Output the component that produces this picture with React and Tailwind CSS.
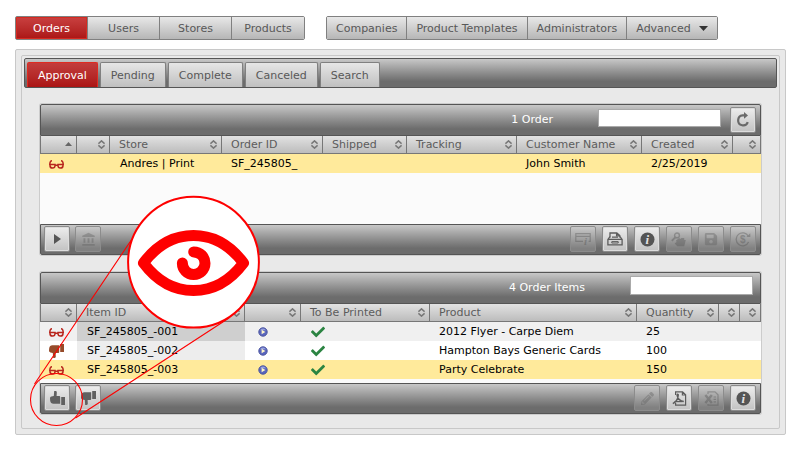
import { FaCheck, FaPencilAlt, FaSave } from "react-icons/fa";
import { MdAccountBalance } from "react-icons/md";
import clsx from "clsx";

const mainNav = ["Orders", "Users", "Stores", "Products"];
const adminNav = ["Companies", "Product Templates", "Administrators", "Advanced"];
const tabs = ["Approval", "Pending", "Complete", "Canceled", "Search"];

const orderColumns = [
    { width: "w-[37px]", sort: "asc" },
    { width: "w-[33px]" },
    { label: "Store", width: "w-[112px]" },
    { label: "Order ID", width: "w-[101px]" },
    { label: "Shipped", width: "w-[84px]" },
    { label: "Tracking" },
    { label: "Customer Name", width: "w-[125px]" },
    { label: "Created", width: "w-[91px]" },
    { width: "w-[28px]" },
];

const itemColumns = [
    { width: "w-[37px]" },
    { label: "Item ID", width: "w-[168px]" },
    { width: "w-[56px]" },
    { label: "To Be Printed", width: "w-[129px]" },
    { label: "Product" },
    { label: "Quantity", width: "w-[82px]" },
    { width: "w-[21px]" },
    { width: "w-[21px]" },
];

const items = [
    { id: "SF_245805_-001", status: "review", product: "2012 Flyer - Carpe Diem", quantity: 25, row: "bg-[#f0f0f0]", idCell: "bg-[#cfcfcf]" },
    { id: "SF_245805_-002", status: "rejected", product: "Hampton Bays Generic Cards", quantity: 100, row: "bg-white", idCell: "bg-[#ededed]" },
    { id: "SF_245805_-003", status: "review", product: "Party Celebrate", quantity: 150, row: "bg-[#ffea9b]", idCell: "" },
];

function GlassesIcon() {
    return (
        <svg width="15" height="9" viewBox="0 0 15 9" fill="none" stroke="#b8261e" strokeWidth="1.5" aria-label="Needs review">
            <path d="M3 .8C1.4.8.8 2 .8 5M12 .8c1.6 0 2.2 1.2 2.2 4.2" />
            <path d="M1 4.4h5v1.4a2.4 2.4 0 0 1-2.4 2.3A2.6 2.6 0 0 1 1 5.6ZM9 4.4h5v1.2a2.6 2.6 0 0 1-2.6 2.5A2.4 2.4 0 0 1 9 5.8ZM6 5.2h3" />
        </svg>
    );
}

function ThumbIcon({ down, color = "#606060", label }) {
    return (
        <svg width="15" height="14" viewBox="0 0 15 14" fill={color} aria-label={label}>
            <g transform={down ? "matrix(1 0 0 -1 0 14)" : undefined}>
                <path d="M4.2 0h1.4c.8 0 1.2.6 1.2 1.4L6.6 5H9c.8 0 1.2.4 1.2 1.2v6.6H3.4C1.6 12.8.4 11.6.2 9.8L0 7.4C0 6.4.6 5.8 1.4 5.6L3.8 5Z" />
                <path d="M11.2 6H15v8h-3.8Z" />
            </g>
        </svg>
    );
}

function SortIcon({ sort }) {
    if (sort === "asc") {
        return (
            <svg width="7" height="9" viewBox="0 0 7 9" className="flex-none" fill="#666">
                <path d="M0 6 3.5 2 7 6Z" />
            </svg>
        );
    }
    return (
        <svg width="7" height="9" viewBox="0 0 7 9" className="flex-none" fill="none" stroke="#777" strokeWidth="1.6">
            <path d="M.4 3.6 3.5.9l3.1 2.7M.4 5.4l3.1 2.7 3.1-2.7" />
        </svg>
    );
}

function PlayDiscIcon() {
    return (
        <svg width="10" height="10" viewBox="0 0 10 10" aria-label="Play">
            <circle cx="5" cy="5" r="4.2" fill="#5a66bd" stroke="#4c569f" />
            <path d="M2 3.2a3.6 3.6 0 0 1 6 0Z" fill="#98a2e0" />
            <path d="M3.6 2.8 7.4 5 3.6 7.2Z" fill="#fff6c8" />
        </svg>
    );
}

function RefreshIcon() {
    return (
        <svg width="14" height="16" viewBox="0 0 14 16" fill="none" stroke="#6a6a6a" strokeWidth="2.2">
            <path d="M9 3.4H6.6a5 5 0 1 0 5.2 6.8" />
            <path d="M8 0v6.8L12 3.4Z" fill="#6a6a6a" stroke="none" />
        </svg>
    );
}

function InfoIcon() {
    return (
        <svg width="15" height="15" viewBox="0 0 15 15">
            <circle cx="7.5" cy="7.5" r="7" fill="#555" />
            <text x="7.2" y="12" textAnchor="middle" fontFamily="Liberation Serif, serif" fontSize="13" fontStyle="italic" fontWeight="bold" fill="#e4e4e4">i</text>
        </svg>
    );
}

function WindowIcon() {
    return (
        <svg width="16" height="14" viewBox="0 0 16 14" fill="none" stroke="#555" strokeWidth="1.2">
            <path d="M8 9.4H.8V1.6h14.4v7.8h-1.6M1 4.4h14" />
            <text x="10.6" y="13.4" textAnchor="middle" fontFamily="Liberation Serif, serif" fontSize="11" fontStyle="italic" fontWeight="bold" fill="#555" stroke="none">i</text>
        </svg>
    );
}

function DrawerIcon() {
    return (
        <svg width="16" height="14" viewBox="0 0 16 14" fill="none" stroke="#5c5c5c" strokeWidth="1.3">
            <path d="M3 5.6V1h6.8l3 2.6v2M9.6 1v2.8h3.2" />
            <path d="M3 4.6.9 7.4v5.4h14.2V7.4L13 4.6M.9 7.4h14.2M5 5.2h6" />
            <path d="M4.8 9.6h6.4v1.4H4.8Z" strokeWidth="1" />
        </svg>
    );
}

function UserFolderIcon() {
    return (
        <svg width="16" height="15" viewBox="0 0 16 15" fill="#555">
            <circle cx="6" cy="3.4" r="2.4" fill="none" stroke="#555" strokeWidth="1.4" />
            <path d="m4.6 5-3.8 3.8" stroke="#555" strokeWidth="1.8" />
            <path d="M5 8.4 8.2 6l1.2 1 1-1h2.8v2h1.6l-1.6 6.2H6.4L3.6 11.6 5.6 10Z" />
        </svg>
    );
}

function MoneyCycleIcon() {
    return (
        <svg width="16" height="15" viewBox="0 0 16 15" fill="none" stroke="#555" strokeWidth="1.3">
            <path d="M13.4 4.2A6.5 6.5 0 1 0 13.6 10" />
            <path d="M11.4 5h4l-.2-3.8Z" fill="#555" stroke="none" />
            <text x="7.8" y="11" textAnchor="middle" fontFamily="Liberation Sans, sans-serif" fontSize="10" fontWeight="bold" fill="#555" stroke="none">$</text>
        </svg>
    );
}

function PdfIcon() {
    return (
        <svg width="15" height="15" viewBox="0 0 15 15" fill="none" stroke="#5c5c5c" strokeWidth="1.2">
            <path d="M3.6 4V.8h7l3 3v10.4H3.6V12M10.4 1v3h3" />
            <path d="M.8 12.6c3-1.6 5.2-5.2 5.4-8.4.2-1.4-1.4-1.2-1 .4.6 3 3 5.4 6.6 5.8" strokeWidth="1.5" />
            <path d="M2.6 10.6h8" />
        </svg>
    );
}

function ExcelIcon() {
    return (
        <svg width="15" height="15" viewBox="0 0 15 15" fill="none" stroke="#555" strokeWidth="1.2">
            <path d="M4 3V.8h7l3 3v10.4H4V13M9.6 6H12M9.6 8.4H12M9.6 10.8H12" />
            <path d="m1.4 4 6.4 8M7.8 4l-6.4 8" strokeWidth="2.4" />
        </svg>
    );
}

function ToolButton({ label, disabled, children }) {
    return (
        <button
            aria-label={label}
            disabled={disabled}
            className={clsx(
                "flex size-[26px] flex-none items-center justify-center rounded-xs border text-[#606060]",
                disabled
                    ? "border-[#8c8c8c] bg-white/15 *:opacity-40"
                    : "border-[#8a8a8a] bg-linear-to-b from-[#ededed] to-[#c2c2c2] shadow-[inset_0_0_0_1px_#dcdcdc]"
            )}
        >
            {children}
        </button>
    );
}

function Bar({ className, children }) {
    return (
        <div className={clsx("flex border border-[#555] bg-linear-to-b from-[#c8c8c8] from-0% via-[#8d8d8d] via-50% to-[#6c6c6c] to-80%", className)}>
            {children}
        </div>
    );
}

function NavGroup({ entries, active, itemClass }) {
    return (
        <div className="flex h-6 overflow-hidden rounded-xs border border-[#808080]">
            {entries.map((entry) => (
                <button
                    key={entry}
                    aria-haspopup={entry === "Advanced" ? "menu" : undefined}
                    className={clsx(
                        "flex items-center justify-center whitespace-nowrap border-r border-[#808080] pt-px last:border-r-0",
                        itemClass,
                        entry === active
                            ? "bg-linear-to-b from-[#c94040] to-[#ab1414] text-white shadow-[inset_0_0_0_1px_#d62a20]"
                            : "bg-linear-to-b from-[#e8e8e8] to-[#b6b6b6] text-[#585858]"
                    )}
                >
                    {entry}
                    {entry === "Advanced" && (
                        <svg width="9" height="5" viewBox="0 0 9 5" className="ml-2" fill="#333">
                            <path d="M0 0h9L4.5 5Z" />
                        </svg>
                    )}
                </button>
            ))}
        </div>
    );
}

function HeaderRow({ columns }) {
    return (
        <thead>
            <tr className="h-[18px] bg-linear-to-b from-[#e2e2e2] to-[#bababa] text-[#5c5c5c]">
                {columns.map((column, idx) => (
                    <th
                        key={idx}
                        className={clsx("border-r border-b border-[#777] p-0 font-normal first:border-l", column.width)}
                    >
                        <button
                            aria-label={column.label ? undefined : "Sort"}
                            className={clsx(
                                "flex h-[17px] w-full items-center justify-between pr-1",
                                column.label && "pl-[9px]"
                            )}
                        >
                            <span className="whitespace-nowrap pt-px">{column.label}</span>
                            <SortIcon sort={column.sort} />
                        </button>
                    </th>
                ))}
            </tr>
        </thead>
    );
}

function Cell({ className = "pl-[9px]", children }) {
    return <td className={clsx("whitespace-nowrap p-0 pt-px", className)}>{children}</td>;
}

function OrdersCard() {
    return (
        <section className="rounded-xs bg-[#fbfbfb] shadow-[0_0_0_1px_#cccccc]">
            <Bar className="h-8 items-center justify-end rounded-t-xs pr-1">
                <label htmlFor="order-search" className="mr-[45px] text-white">1 Order</label>
                <input id="order-search" className="mr-[9px] mb-1 h-[18px] w-[123px] border border-[#aaa] bg-white px-1" />
                <ToolButton label="Refresh"><RefreshIcon /></ToolButton>
            </Bar>
            <table className="w-full table-fixed border-separate border-spacing-0 text-left">
                <HeaderRow columns={orderColumns} />
                <tbody>
                    <tr className="h-[19px] bg-[#ffea9b]">
                        <Cell><GlassesIcon /></Cell>
                        <Cell />
                        <Cell className="pl-[10px]">Andres | Print</Cell>
                        <Cell>SF_245805_</Cell>
                        <Cell />
                        <Cell />
                        <Cell>John Smith</Cell>
                        <Cell>2/25/2019</Cell>
                        <Cell />
                    </tr>
                </tbody>
            </table>
            <Bar className="mt-[51px] h-[31px] items-start gap-1.5 rounded-b-xs pt-px pr-1 pl-[3px]">
                <div className="flex flex-1 gap-[5px]">
                    <ToolButton label="Run">
                        <svg width="7" height="10" viewBox="0 0 7 10" fill="#555"><path d="M0 0 7 5 0 10Z" /></svg>
                    </ToolButton>
                    <ToolButton label="Company" disabled><MdAccountBalance size={15} /></ToolButton>
                </div>
                <ToolButton label="Export window" disabled><WindowIcon /></ToolButton>
                <ToolButton label="Job ticket"><DrawerIcon /></ToolButton>
                <ToolButton label="Order info"><InfoIcon /></ToolButton>
                <ToolButton label="Assign" disabled><UserFolderIcon /></ToolButton>
                <ToolButton label="Save" disabled><FaSave size={14} /></ToolButton>
                <ToolButton label="Refund" disabled><MoneyCycleIcon /></ToolButton>
            </Bar>
        </section>
    );
}

function ItemsCard() {
    return (
        <section className="mt-[17px] rounded-xs bg-[#fbfbfb] shadow-[0_0_0_1px_#cccccc]">
            <Bar className="h-8 items-start justify-end rounded-t-xs pt-[3px] pr-[7px]">
                <label htmlFor="item-search" className="mr-[45px] leading-6 text-white">4 Order Items</label>
                <input id="item-search" className="h-[19px] w-[123px] border border-[#aaa] bg-white px-1" />
            </Bar>
            <table className="w-full table-fixed border-separate border-spacing-0 text-left">
                <HeaderRow columns={itemColumns} />
                <tbody>
                    {items.map((item) => (
                        <tr key={item.id} className={clsx("h-[19px]", item.row)}>
                            <Cell>
                                {item.status === "review" ? <GlassesIcon /> : <ThumbIcon down color="#964b2a" label="Rejected" />}
                            </Cell>
                            <Cell className={clsx("pl-[10px]", item.idCell)}>{item.id}</Cell>
                            <Cell className="pl-[13px]"><PlayDiscIcon /></Cell>
                            <Cell className="pl-[10px]"><FaCheck size={14} color="#2b8442" aria-label="Yes" /></Cell>
                            <Cell>{item.product}</Cell>
                            <Cell>{item.quantity}</Cell>
                            <Cell />
                            <Cell />
                        </tr>
                    ))}
                </tbody>
            </table>
            <Bar className="mt-1 h-[31px] items-start gap-1.5 rounded-b-xs pt-px pr-1 pl-[3px]">
                <div className="flex flex-1 gap-[5px]">
                    <ToolButton label="Approve"><ThumbIcon /></ToolButton>
                    <ToolButton label="Reject"><ThumbIcon down /></ToolButton>
                </div>
                <ToolButton label="Edit" disabled><FaPencilAlt size={13} /></ToolButton>
                <ToolButton label="View PDF"><PdfIcon /></ToolButton>
                <ToolButton label="Export to Excel" disabled><ExcelIcon /></ToolButton>
                <ToolButton label="Item info"><InfoIcon /></ToolButton>
            </Bar>
        </section>
    );
}

// Magnified view of the approve button
function Callout() {
    return (
        <svg width="270" height="435" viewBox="0 0 270 435" className="pointer-events-none absolute top-0 left-0 z-10" fill="none" stroke="#fe0000">
            <circle cx="56.5" cy="399.5" r="26" strokeWidth="1.1" />
            <path d="M34.5 384 132 239M75.5 418 229 318" strokeWidth="1.1" />
            <circle cx="193.5" cy="262.2" r="65.4" fill="#fff" strokeWidth="2" />
            <path d="M143.5 263C157 245 173 235.5 193.5 235.5S230 245 243.5 263C230 281 214 290.5 193.5 290.5S157 281 143.5 263Z" strokeWidth="11" strokeLinejoin="round" />
            <path d="M182.4 263a11.3 11.3 0 1 0 11.3-11.1" strokeWidth="11" strokeLinecap="round" />
        </svg>
    );
}

export default function App() {
    return (
        <div className="relative bg-white px-[15px] pt-4 pb-4 font-['Verdana','DejaVu_Sans',sans-serif] text-[11px] leading-4 text-black">
            <nav className="flex gap-[21px]">
                <NavGroup entries={mainNav} active="Orders" itemClass="w-18" />
                <NavGroup entries={adminNav} itemClass="px-[9px]" />
            </nav>

            <main className="mt-[9px] rounded-xs border border-[#c8c8c8] bg-[#e9e9e9] p-[5px]">
                <div className="rounded-xs border border-[#c8c8c8] p-[2px]">
                    <Bar className="h-[30px] items-end gap-0.5 rounded-xs pl-[2px]">
                        {tabs.map((tab) => (
                            <button
                                key={tab}
                                className={clsx(
                                    "h-[25px] rounded-t-xs border border-b-0 px-[10px] pt-px",
                                    tab === "Approval"
                                        ? "border-[#e02a20] bg-linear-to-b from-[#c23c3c] to-[#ab1414] text-white"
                                        : "border-[#808080] bg-linear-to-b from-[#e6e6e6] to-[#c0c0c0] text-[#585858]"
                                )}
                            >
                                {tab}
                            </button>
                        ))}
                    </Bar>
                    <div className="px-4 pt-4 pb-3">
                        <OrdersCard />
                        <ItemsCard />
                    </div>
                </div>
            </main>
            <Callout />
        </div>
    );
}
